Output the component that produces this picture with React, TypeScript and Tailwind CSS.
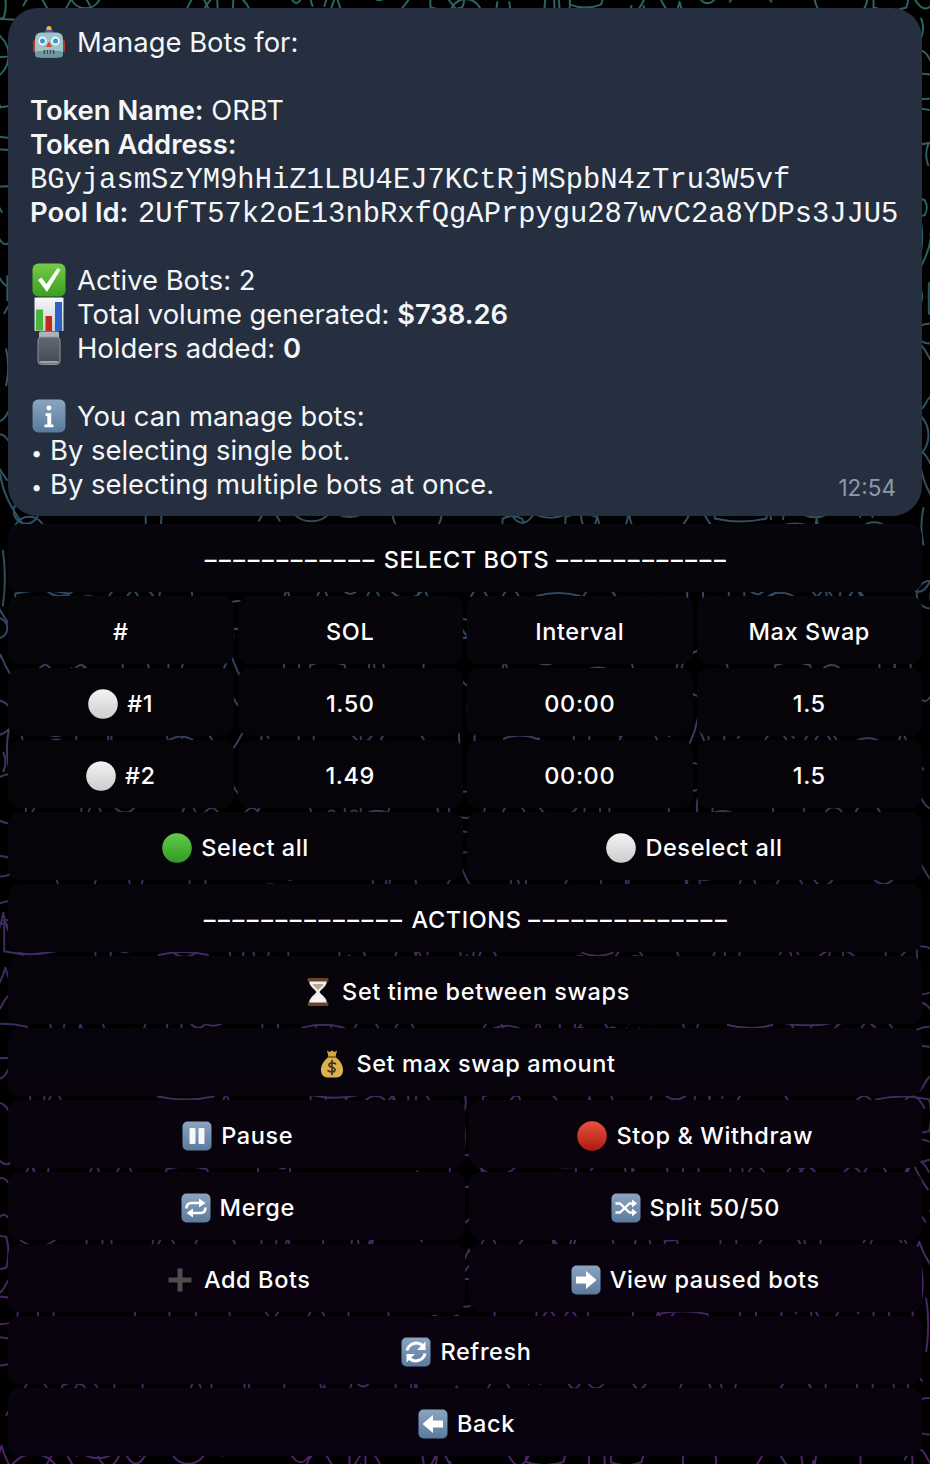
import type { ReactNode } from 'react'

const sans = { fontFamily: 'Inter, "Noto Sans", sans-serif' }

function buildDoodle() {
  let seed = 41
  const rand = (n: number) => {
    seed = (seed * 16807) % 2147483647
    return (seed % 1000) / 1000 * n
  }
  const shapes: string[] = []
  for (let y = -20; y < 1480; y += 34) {
    for (let x = -20; x < 950; x += 46) {
      const cx = x + rand(36)
      const cy = y + rand(26)
      const r = 9 + rand(20)
      const kind = Math.floor(rand(5))
      if (kind === 0) {
        shapes.push(`M${cx - r} ${cy}a${r} ${r} 0 1 0 ${r * 2} 0a${r} ${r} 0 1 0 ${-r * 2} 0`)
      } else if (kind === 1) {
        shapes.push(`M${cx - r} ${cy - r * 0.6}q${r} -6 ${r * 2} 0q4 ${r * 0.6} 0 ${r * 1.2}q${-r} 6 ${-r * 2} 0z`)
      } else if (kind === 2) {
        shapes.push(`M${cx - r} ${cy}q${r / 2} ${-r} ${r} 0t${r} 0t${r} 0`)
      } else if (kind === 3) {
        shapes.push(`M${cx - r} ${cy + r}Q${cx - 4} ${cy} ${cx} ${cy - r}Q${cx + 4} ${cy} ${cx + r} ${cy + r}`)
      } else {
        shapes.push(`M${cx - 6} ${cy - r}q-4 ${r} 0 ${r * 2}M${cx + 6} ${cy - r}q4 ${r} 0 ${r * 2}`)
      }
    }
  }
  return shapes.join('')
}

const doodlePath = buildDoodle()

function Doodle() {
  return (
    <svg className="absolute inset-0" width="930" height="1464" viewBox="0 0 930 1464" fill="none">
      <defs>
        <linearGradient id="doodleStroke" gradientUnits="userSpaceOnUse" x1="0" y1="0" x2="0" y2="1464">
          <stop offset="0" stopColor="#2c6461" />
          <stop offset="0.35" stopColor="#2f4f63" />
          <stop offset="0.6" stopColor="#3b2e5c" />
          <stop offset="1" stopColor="#4f2168" />
        </linearGradient>
      </defs>
      <path d={doodlePath} stroke="url(#doodleStroke)" strokeWidth="2" strokeLinecap="round" strokeLinejoin="round" />
    </svg>
  )
}

function Ball({ from, to, id }: { from: string; to: string; id: string }) {
  return (
    <svg width="30" height="30" viewBox="0 0 30 30" className="shrink-0">
      <defs>
        <linearGradient id={id} x1="0" y1="0" x2="0" y2="1">
          <stop offset="0" stopColor={from} />
          <stop offset="1" stopColor={to} />
        </linearGradient>
      </defs>
      <circle cx="15" cy="15" r="14.8" fill={`url(#${id})`} />
    </svg>
  )
}

const WhiteBall = ({ id }: { id: string }) => <Ball id={id} from="#f3f3f3" to="#cdcdcd" />

function Tile({ id, size = 30, children }: { id: string; size?: number; children: ReactNode }) {
  return (
    <svg width={size} height={size} viewBox="0 0 30 30" className="shrink-0">
      <defs>
        <linearGradient id={id} x1="0" y1="0" x2="0" y2="1">
          <stop offset="0" stopColor="#8ba5c0" />
          <stop offset="1" stopColor="#5a7a9d" />
        </linearGradient>
      </defs>
      <rect x="0.5" y="0.5" width="29" height="29" rx="5" fill={`url(#${id})`} />
      {children}
    </svg>
  )
}

function RobotIcon() {
  return (
    <svg width="34" height="34" viewBox="0 0 34 34" className="shrink-0">
      <circle cx="17" cy="3.5" r="2.6" fill="#e9b93c" />
      <rect x="13" y="5" width="8" height="3.5" rx="1.2" fill="#6a4aa8" />
      <rect x="1" y="15" width="4" height="12" rx="1.6" fill="#b5392e" />
      <rect x="29" y="15" width="4" height="12" rx="1.6" fill="#b5392e" />
      <rect x="3" y="7.5" width="28" height="25" rx="6" fill="#9cc3c9" />
      <rect x="3" y="26" width="28" height="6.5" rx="3.2" fill="#6d97a1" />
      <circle cx="10.5" cy="16" r="4.4" fill="#e9f5f8" />
      <circle cx="23.5" cy="16" r="4.4" fill="#e9f5f8" />
      <circle cx="10.5" cy="16" r="2.5" fill="#3d95cf" />
      <circle cx="23.5" cy="16" r="2.5" fill="#3d95cf" />
      <path d="M17 16.5l3 5.5h-6z" fill="#d8453a" />
      <rect x="11.5" y="25" width="11" height="4" rx="1" fill="#3b4a50" />
      <path d="M14 25v4M17 25v4M20 25v4" stroke="#c9d4d6" strokeWidth="1" />
    </svg>
  )
}

function CheckIcon() {
  return (
    <svg width="34" height="34" viewBox="0 0 34 34" className="shrink-0">
      <defs>
        <linearGradient id="checkFill" x1="0" y1="0" x2="0" y2="1">
          <stop offset="0" stopColor="#76cc48" />
          <stop offset="1" stopColor="#3b9d1f" />
        </linearGradient>
      </defs>
      <rect x="0.5" y="0.5" width="33" height="33" rx="6" fill="url(#checkFill)" />
      <path d="M6 17l3.5-2.5 5 6.5L25.5 5l3 1.8L15 29z" fill="#fff" />
    </svg>
  )
}

function ChartIcon() {
  return (
    <svg width="34" height="34" viewBox="0 0 34 34" className="shrink-0">
      <defs>
        <linearGradient id="chartFill" x1="0" y1="0" x2="0" y2="1">
          <stop offset="0" stopColor="#f6f7f8" />
          <stop offset="1" stopColor="#c6ccd2" />
        </linearGradient>
      </defs>
      <rect x="2.5" y="0.5" width="29" height="34" rx="1" fill="url(#chartFill)" />
      <rect x="4" y="12.5" width="7" height="21" fill="#4ab33c" />
      <rect x="13.5" y="19" width="6.5" height="15" fill="#c4291d" />
      <rect x="23" y="5" width="7" height="29" fill="#2b62c4" />
    </svg>
  )
}

function JarIcon() {
  return (
    <svg width="34" height="34" viewBox="0 0 34 34" className="shrink-0">
      <defs>
        <linearGradient id="jarFill" x1="0" y1="0" x2="0" y2="1">
          <stop offset="0" stopColor="#626873" />
          <stop offset="1" stopColor="#454b55" />
        </linearGradient>
      </defs>
      <rect x="7" y="0.5" width="20" height="7" rx="1.5" fill="#aeb3b8" />
      <rect x="6" y="6" width="22" height="27.500" rx="3.500" fill="url(#jarFill)" stroke="#8d939a" strokeWidth="1" />
      <rect x="7.500" y="30" width="19" height="2.500" rx="1" fill="#9aa0a6" />
    </svg>
  )
}

function Hourglass() {
  return (
    <svg width="30" height="30" viewBox="0 0 30 30" className="shrink-0">
      <path d="M6 3h18c0 7-6 9-7.500 12C18 18 24 20 24 27H6c0-7 6-9 7.500-12C12 12 6 10 6 3z" fill="#eef0f0" />
      <path d="M9.500 7h11c-1 3-4.500 4-5.500 6.500C14 11 10.500 10 9.500 7z" fill="#b8a898" />
      <path d="M8.500 26c0-3 4.500-5 6.500-7 2 2 6.500 4 6.500 7z" fill="#f8f5ef" />
      <rect x="4.500" y="1" width="21" height="3.400" rx="1.200" fill="#6b4426" />
      <rect x="4.500" y="25.600" width="21" height="3.400" rx="1.200" fill="#6b4426" />
    </svg>
  )
}

function MoneyBag() {
  return (
    <svg width="30" height="30" viewBox="0 0 30 30" className="shrink-0">
      <path d="M10 1.500l2.500 1.500 2.500-1.500 2.500 1.500L20 1.500 18.500 8h-7z" fill="#d6a63c" />
      <path d="M11.500 8h7c5 3.500 8 9 7.500 14-.4 4.500-3.500 6.500-7 6.500h-8c-3.500 0-6.600-2-7-6.500C3.500 17 6.500 11.500 11.500 8z" fill="#dcb04c" />
      <rect x="11" y="7" width="8" height="2" rx="1" fill="#8f6b1e" />
      <path d="M18.500 14.800c-1-1.200-6-1.600-6.500 1-.5 3 6.500 2 6 5.200-.4 2.600-5.800 2.200-7 .6M15 11.500v14" stroke="#3d3320" strokeWidth="1.700" fill="none" strokeLinecap="round" />
    </svg>
  )
}

function PlusIcon() {
  return (
    <svg width="30" height="30" viewBox="0 0 30 30" className="shrink-0">
      <path d="M12.500 3.500h5V12.500H26.500v5H17.500V26.500h-5V17.500H3.500v-5H12.500z" fill="#4d4d4d" />
    </svg>
  )
}

const PauseIcon = (
  <Tile id="tilePause">
    <rect x="7.500" y="7" width="6" height="16" rx="1" fill="#f6f8fa" />
    <rect x="16.500" y="7" width="6" height="16" rx="1" fill="#f6f8fa" />
  </Tile>
)

const RepeatIcon = (
  <Tile id="tileRepeat">
    <path d="M5.500 15.500c0-3.500 1.500-5.500 5-5.500H19" stroke="#fff" strokeWidth="2.600" fill="none" />
    <path d="M18 5.500l6.500 4.500-6.500 4.500z" fill="#fff" />
    <path d="M24.500 14.500c0 3.500-1.500 5.500-5 5.500H11" stroke="#fff" strokeWidth="2.600" fill="none" />
    <path d="M12 15.500L5.500 20l6.500 4.500z" fill="#fff" />
  </Tile>
)

const ShuffleIcon = (
  <Tile id="tileShuffle">
    <path d="M4.500 10.500h4.500l9.500 9h3M4.500 19.500h4.500l9.500-9h3" stroke="#fff" strokeWidth="2.300" fill="none" />
    <path d="M21 6.500l5 4-5 4zM21 15.500l5 4-5 4z" fill="#fff" />
  </Tile>
)

const RightIcon = (
  <Tile id="tileRight">
    <path d="M5 11.500h10V6l10.500 9L15 24v-5.500H5z" fill="#fff" />
  </Tile>
)

const BackIcon = (
  <Tile id="tileBack">
    <path d="M25 11.500H15V6L4.500 15 15 24v-5.500h10z" fill="#fff" />
  </Tile>
)

const RefreshIcon = (
  <Tile id="tileRefresh">
    <path d="M6 13.500A9.500 9.500 0 0 1 21.500 8.500" stroke="#fff" strokeWidth="3" fill="none" />
    <path d="M24.500 4.500v8.500H16z" fill="#fff" />
    <path d="M24 16.500A9.500 9.500 0 0 1 8.500 21.500" stroke="#fff" strokeWidth="3" fill="none" />
    <path d="M5.500 25.500V17H14z" fill="#fff" />
  </Tile>
)

function Row({ children }: { children: ReactNode }) {
  return <div className="flex gap-1">{children}</div>
}

function Btn({ label, icon, nudge }: { label: ReactNode; icon?: ReactNode; nudge?: boolean }) {
  return (
    <div
      className={`flex h-[68px] min-w-0 flex-1 items-center justify-center gap-[9px] rounded-xl bg-gradient-to-b from-[#060c12] via-[#060409] to-[#0a0210] bg-fixed pt-1 text-[23.5px] font-medium tracking-[0.6px] whitespace-nowrap text-white ${
        nudge ? 'pl-[3px]' : ''
      }`}
    >
      {icon}
      <span>{label}</span>
    </div>
  )
}

function SectionTitle({ dashes, title }: { dashes: string; title: string }) {
  return (
    <>
      <span className="tracking-[2.6px]">{dashes}</span> {title} <span className="tracking-[2.6px]">{dashes}</span>
    </>
  )
}

function Line({ children }: { children: ReactNode }) {
  return <div className="h-[34px] whitespace-nowrap">{children}</div>
}

function IconLine({ icon, children }: { icon: ReactNode; children: ReactNode }) {
  return (
    <div className="flex h-[34px] items-center whitespace-nowrap">
      <span className="mr-[12px] ml-[3px] flex w-[32px] justify-center">{icon}</span>
      <span>{children}</span>
    </div>
  )
}

function Bullet({ children }: { children: ReactNode }) {
  return (
    <Line>
      <span className="inline-block w-[20px] pl-[1px] text-[20px]">•</span>
      {children}
    </Line>
  )
}

const mono = 'font-["Liberation_Mono",monospace] text-[28.8px]'

export default function App() {
  return (
    <div style={sans} className="relative h-[1464px] w-[930px] overflow-hidden bg-black">
      <Doodle />
      <div className="relative flex flex-col gap-1 px-2 pt-2">
        <div className="relative mb-1 rounded-[30px] bg-[#252f3f] pt-[17px] pr-3 pb-[15px] pl-[22px] text-[27.4px] leading-[34px] text-[#f4f6f8]">
          <IconLine icon={<RobotIcon />}>Manage Bots for:</IconLine>
          <Line>{' '}</Line>
          <Line>
            <b className="font-semibold">Token Name:</b> ORBT
          </Line>
          <Line>
            <b className="font-semibold">Token Address:</b>
          </Line>
          <Line>
            <span className={mono}>BGyjasmSzYM9hHiZ1LBU4EJ7KCtRjMSpbN4zTru3W5vf</span>
          </Line>
          <Line>
            <b className="font-semibold">Pool Id:</b>{' '}
            <span className={`ml-[2px] ${mono}`}>2UfT57k2oE13nbRxfQgAPrpygu287wvC2a8YDPs3JJU5</span>
          </Line>
          <Line>{' '}</Line>
          <IconLine icon={<CheckIcon />}>Active Bots: 2</IconLine>
          <IconLine icon={<ChartIcon />}>
            Total volume generated: <b className="font-semibold">$738.26</b>
          </IconLine>
          <IconLine icon={<JarIcon />}>
            Holders added: <b className="font-semibold">0</b>
          </IconLine>
          <Line>{' '}</Line>
          <IconLine
            icon={
              <Tile id="tileInfo" size={34}>
                <circle cx="15" cy="8" r="2.200" fill="#fff" />
                <path d="M12 12.500h5v10h2v2.500h-8v-2.500h2.500v-7.500H12z" fill="#fff" />
              </Tile>
            }
          >
            You can manage bots:
          </IconLine>
          <Bullet>By selecting single bot.</Bullet>
          <Bullet>By selecting multiple bots at once.</Bullet>
          <span className="absolute right-[26px] bottom-[13px] text-[22.5px] leading-[30px] text-[#8d9aa9]">12:54</span>
        </div>

        <Row>
          <Btn nudge label={<SectionTitle dashes="––––––––––––" title="SELECT BOTS" />} />
        </Row>

        <Row>
          <Btn label="#" />
          <Btn label="SOL" />
          <Btn label="Interval" />
          <Btn label="Max Swap" />
        </Row>
        <Row>
          <Btn label="#1" icon={<WhiteBall id="ball1" />} />
          <Btn label="1.50" />
          <Btn label="00:00" />
          <Btn label="1.5" />
        </Row>
        <Row>
          <Btn label="#2" icon={<WhiteBall id="ball2" />} />
          <Btn label="1.49" />
          <Btn label="00:00" />
          <Btn label="1.5" />
        </Row>
        <Row>
          <Btn label="Select all" icon={<Ball id="ballGreen" from="#62cb4c" to="#2f9b22" />} />
          <Btn label="Deselect all" icon={<WhiteBall id="ball3" />} />
        </Row>

        <Row>
          <Btn nudge label={<SectionTitle dashes="––––––––––––––" title="ACTIONS" />} />
        </Row>
        <Row>
          <Btn nudge label="Set time between swaps" icon={<Hourglass />} />
        </Row>
        <Row>
          <Btn nudge label="Set max swap amount" icon={<MoneyBag />} />
        </Row>

        <Row>
          <Btn nudge label="Pause" icon={PauseIcon} />
          <Btn label="Stop & Withdraw" icon={<Ball id="ballRed" from="#e8533f" to="#ad1a0e" />} />
        </Row>
        <Row>
          <Btn nudge label="Merge" icon={RepeatIcon} />
          <Btn label="Split 50/50" icon={ShuffleIcon} />
        </Row>
        <Row>
          <Btn nudge label="Add Bots" icon={<PlusIcon />} />
          <Btn label="View paused bots" icon={RightIcon} />
        </Row>

        <Row>
          <Btn nudge label="Refresh" icon={RefreshIcon} />
        </Row>
        <Row>
          <Btn nudge label="Back" icon={BackIcon} />
        </Row>
      </div>
    </div>
  )
}
